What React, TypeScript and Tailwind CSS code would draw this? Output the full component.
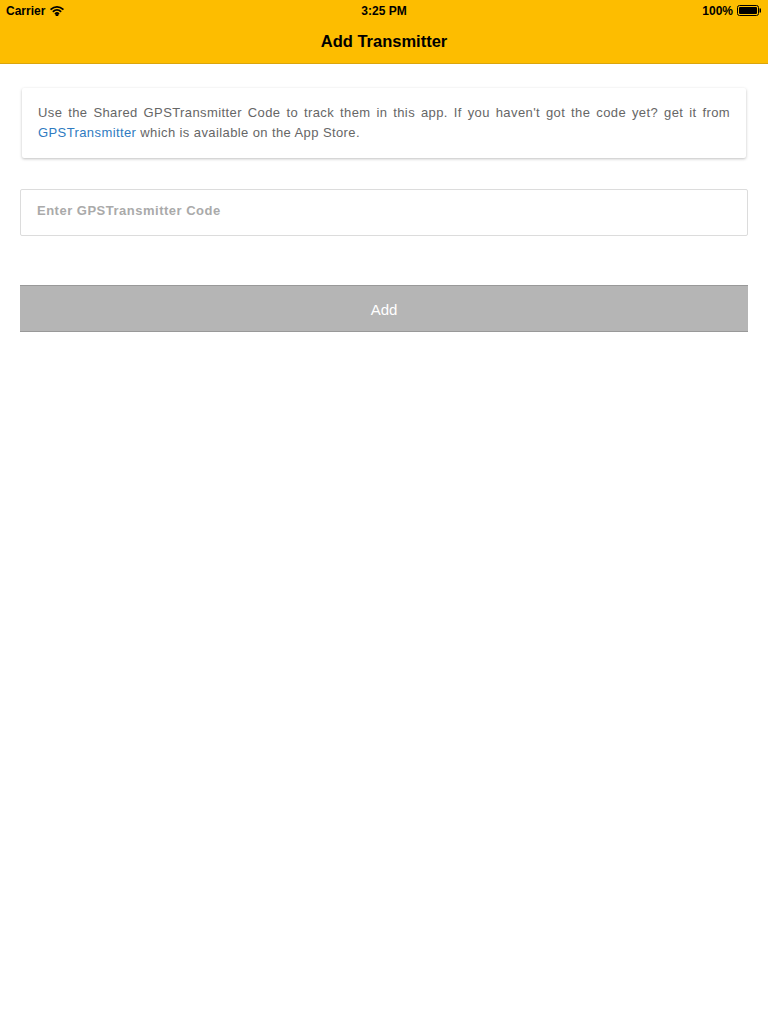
function Battery() {
  return (
    <svg width="25" height="11" viewBox="0 0 25 11">
      <rect x="0.5" y="0.5" width="21" height="10" rx="2" fill="none" stroke="#000" />
      <rect x="2" y="2" width="18" height="7" rx="1" fill="#000" />
      <rect x="22.5" y="3.5" width="1.5" height="4" fill="#000" />
    </svg>
  )
}

function WifiIcon() {
  return (
    <svg width="14" height="11" viewBox="0 0 14 11" fill="none" stroke="#000" strokeWidth="1.8" strokeLinecap="round">
      <path d="M1.2 4.2a8.2 8.2 0 0 1 11.6 0" />
      <path d="M3.4 6.4a5 5 0 0 1 7.2 0" />
      <path d="M5.5 8.5a2 2 0 0 1 3 0" />
      <circle cx="7" cy="9.8" r="0.6" fill="#000" />
    </svg>
  )
}

export default function App() {
  return (
    <div className="w-[768px] h-[1024px] bg-white font-['Liberation_Sans',Arial,sans-serif]">
      <div className="bg-[#fdbd00] border-b border-[#dba50c]">
        <div className="h-5 pt-[1px] grid grid-cols-3 items-center px-[6px] text-[12px] font-bold text-black">
          <div className="flex items-center gap-[5px]">
            <span>Carrier</span>
            <WifiIcon />
          </div>
          <span className="text-center">3:25 PM</span>
          <div className="flex items-center justify-end gap-1">
            <span>100%</span>
            <Battery />
          </div>
        </div>
        <div className="h-[43px] flex items-center justify-center text-[16.5px] font-bold text-black">
          Add Transmitter
        </div>
      </div>

      <div className="px-5 pt-[24px]">
        <div className="mx-[2px] bg-white rounded-[2px] shadow-[0_1px_3px_rgba(0,0,0,0.25)] px-4 py-[15px] text-[13px] leading-[20px] tracking-[0.4px] text-[#666] text-justify">
          Use the Shared GPSTransmitter Code to track them in this app. If you haven't got the code yet? get it from{" "}
          <span className="text-[#2f7bc1]">GPSTransmitter</span> which is available on the App Store.
        </div>

        <div className="mt-[31px] h-[47px] pb-[3px] border border-[#dcdcdc] rounded-[2px] flex items-center px-4 text-[13px] font-bold tracking-[0.5px] text-[#aaa]">
          Enter GPSTransmitter Code
        </div>

        <button className="mt-[49px] w-full h-[47px] pt-[3px] bg-[#b5b5b5] border-y border-[#999] text-white text-[15px]">
          Add
        </button>
      </div>
    </div>
  )
}
